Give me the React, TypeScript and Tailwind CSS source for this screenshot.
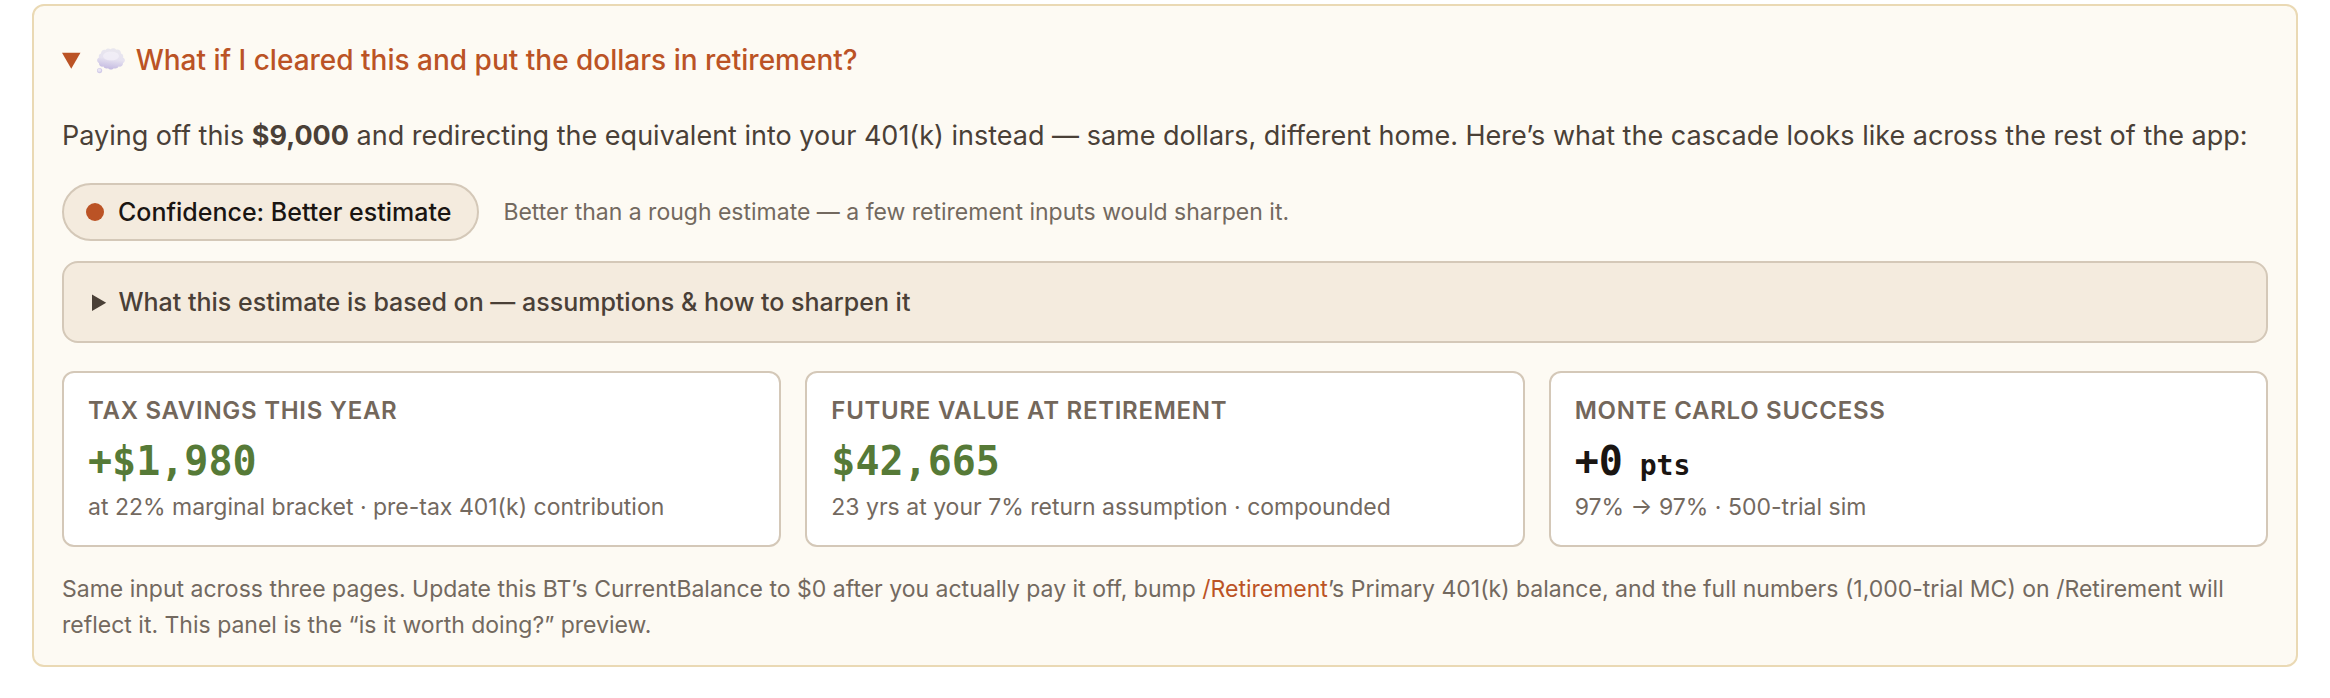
interface Stat {
  label: string;
  value: string;
  unit?: string;
  note: string;
  valueClass: string;
}

const STATS: Stat[] = [
  {
    label: "Tax savings this year",
    value: "+$1,980",
    note: "at 22% marginal bracket · pre-tax 401(k) contribution",
    valueClass: "text-[#567a37]",
  },
  {
    label: "Future value at retirement",
    value: "$42,665",
    note: "23 yrs at your 7% return assumption · compounded",
    valueClass: "text-[#567a37]",
  },
  {
    label: "Monte Carlo success",
    value: "+0",
    unit: "pts",
    note: "97% → 97% · 500-trial sim",
    valueClass: "text-[#1a1512]",
  },
];

function ThoughtBubble() {
  return (
    <svg viewBox="0 0 28 26" className="mr-[11px] ml-[5px] inline-block h-[26px] w-7 align-[-4px]" aria-hidden="true">
      <defs>
        <linearGradient id="puff" x1="0.6" y1="0" x2="0.4" y2="1">
          <stop offset="0" stopColor="#e9e7ee" />
          <stop offset="0.5" stopColor="#e6e2f0" />
          <stop offset="1" stopColor="#c2b8e0" />
        </linearGradient>
      </defs>
      <g fill="url(#puff)">
        <path d="M4 5.500C4 2.500 6.500 1.200 8.500 2 9.500.2 12 0 13.500 1.200 15 0 18 0 19.200 1.800 21.500 1 24 2.600 24 5.500 26 6 26.600 8 26 9.500 28.600 11 28.400 14 26 15 26.200 17.600 24 19.300 21.500 18.600 20.500 20.600 18.300 21 16.800 20.200 15.500 22 12.500 22 11 20.200 9.500 21 7.300 20.600 6.500 18.600 4 19.300 1.800 17.600 2 15-.4 14-.6 11 2 9.500 1.400 8 2 6 4 5.500Z" />
      </g>
      <ellipse cx="14" cy="8" rx="8" ry="4.500" fill="#f6f4fa" opacity="0.6" />
      <circle cx="2.600" cy="22.600" r="2.600" fill="#d3cce9" />
      <circle cx="2.400" cy="22.200" r="1.600" fill="#e9e5f4" />
    </svg>
  );
}

function StatCard({ label, value, unit, note, valueClass }: Stat) {
  return (
    <div className="rounded-xl border-2 border-[#d4c8b8] bg-white px-6 pt-5 pb-[22px]">
      <p className="text-2xl leading-9 font-semibold tracking-[0.03em] text-[#73675b] uppercase">{label}</p>
      <p className={`mt-0.5 font-['DejaVu_Sans_Mono',monospace] text-[40px] leading-[60px] font-bold ${valueClass}`}>
        {value}
        {unit && <span className="text-[28px] leading-none"> {unit}</span>}
      </p>
      <p className="text-[23px] leading-8">{note}</p>
    </div>
  );
}

export default function App() {
  return (
    <main className="bg-white px-8 pt-1 pb-8 font-[Inter,sans-serif] text-[23px] text-[#73695f]">
      <details open className="rounded-xl border-2 border-[#ead9b4] bg-[#fdfaf3] px-7 pt-[33px] pb-[22px]">
        <summary className="cursor-pointer text-[28px] leading-[42px] font-medium text-[#bb5325]">
          <ThoughtBubble />
          What if I cleared this and put the dollars in retirement?
        </summary>

        <p className="mt-[34px] text-[27px] leading-[42px] text-[#4a4037]">
          Paying off this <strong className="font-bold">$9,000</strong> and redirecting the equivalent into your
          401(k) instead — same dollars, different home. Here’s what the cascade looks like across the rest of the app:
        </p>

        <div className="mt-[26px] flex flex-wrap items-center gap-6">
          <span className="inline-flex items-center gap-[14px] rounded-full border-2 border-[#d4c8b8] bg-[#f4ebde] py-[9px] pr-[26px] pl-[22px] text-[25px] leading-9 font-medium text-[#1a1512]">
            <span className="size-[18px] rounded-full bg-[#bb5325]" />
            Confidence: Better estimate
          </span>
          <span>Better than a rough estimate — a few retirement inputs would sharpen it.</span>
        </div>

        <details className="mt-5 rounded-2xl border-2 border-[#d4c8b8] bg-[#f4ebde] px-7 py-[21px]">
          <summary className="cursor-pointer text-[25px] leading-9 font-medium text-[#4a4037]">
            What this estimate is based on — assumptions &amp; how to sharpen it
          </summary>
        </details>

        <div className="mt-7 grid grid-cols-1 gap-6 md:grid-cols-3">
          {STATS.map((stat) => (
            <StatCard key={stat.label} {...stat} />
          ))}
        </div>

        <p className="mt-6 leading-9">
          Same input across three pages. Update this BT’s CurrentBalance to $0 after you actually pay it off, bump{" "}
          <a href="#retirement" className="text-[#bb5325]">
            /Retirement
          </a>
          ’s Primary 401(k) balance, and the full numbers (1,000-trial MC) on /Retirement will reflect it. This panel
          is the “is it worth doing?” preview.
        </p>
      </details>
    </main>
  );
}
